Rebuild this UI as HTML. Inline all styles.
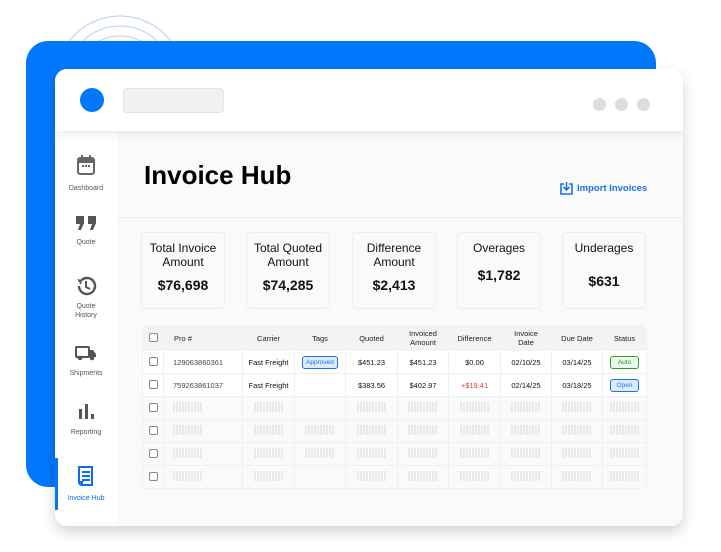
<!DOCTYPE html>
<html><head><style>
*{box-sizing:border-box;margin:0;padding:0}
body{width:721px;height:552px;background:#fff;position:relative;overflow:hidden;font-family:"Liberation Sans",Arial,sans-serif;color:#111}
.abs{position:absolute}
.bd{left:26px;top:41px;width:630px;height:446px;background:#0078fb;border-radius:22px}
.win{left:55px;top:69px;width:628px;height:457px;background:#fff;border-radius:12px;box-shadow:0 6px 14px rgba(0,0,0,.18);overflow:hidden}
.hdr{left:0;top:0;width:628px;height:62px;background:#fff;box-shadow:0 3px 8px rgba(0,0,0,.08);z-index:2}
.side{left:0;top:62px;width:62px;height:395px;background:#fff}
.main{left:62px;top:62px;width:566px;height:395px;background:#fafafa}
.ic{position:absolute;left:0;width:62px;text-align:center}
.lb{position:absolute;left:0;width:62px;text-align:center;font-size:7px;color:#555;line-height:9px}
.card{position:absolute;top:101px;width:84px;height:77px;background:#fafafa;border:1px solid #eee;border-radius:4px;text-align:center}
.card .t{font-size:12px;line-height:14px;margin-top:8px;color:#111}
.card .v{font-size:14px;font-weight:bold;margin-top:8px}
table{border-collapse:collapse;font-size:7.5px;width:504px;table-layout:fixed}
td,th{border:1px solid #f0f0f0;text-align:center;height:23px;padding:0}
th{background:#f2f3f5;font-weight:normal;height:25px;line-height:9px;border-color:#f2f3f5;color:#222}
.cb{display:inline-block;width:9px;height:9px;border:1px solid #888;border-radius:2px;background:#fff}
.ph{display:inline-block;width:30px;height:10px;background:repeating-linear-gradient(90deg,#e9e9e9 0 2px,transparent 2px 3px)}
.tag{display:inline-block;border:1px solid #1a73e8;background:#dcebfd;color:#1a73e8;border-radius:3px;padding:2px 3px;font-size:6.5px}
</style></head><body>
<svg class="abs" style="left:40px;top:5px" width="160" height="130"><g fill="none" stroke="#b9cde8" stroke-width="1"><circle cx="80" cy="75" r="64"/><circle cx="80" cy="75" r="54"/><circle cx="80" cy="75" r="44"/><circle cx="80" cy="75" r="34"/><circle cx="80" cy="75" r="24"/><circle cx="80" cy="75" r="14"/></g></svg>
<div class="abs bd"></div>
<div class="abs win">
 <div class="abs hdr">
  <div class="abs" style="left:25px;top:19px;width:24px;height:24px;border-radius:50%;background:#0078fb"></div>
  <div class="abs" style="left:68px;top:19px;width:101px;height:25px;border-radius:4px;background:#f0f1f3;border:1px solid #e2e3e5"></div>
  <div class="abs" style="left:538px;top:29px;width:13px;height:13px;border-radius:50%;background:#ddd"></div>
  <div class="abs" style="left:560px;top:29px;width:13px;height:13px;border-radius:50%;background:#ddd"></div>
  <div class="abs" style="left:582px;top:29px;width:13px;height:13px;border-radius:50%;background:#ddd"></div>
 </div>
 <div class="abs side">
  <div class="ic" style="top:23px"><svg width="20" height="22" viewBox="0 0 20 22"><rect x="2" y="4" width="16" height="16" rx="2" fill="none" stroke="#666" stroke-width="2"/><rect x="2" y="4" width="16" height="5" fill="#666"/><rect x="5" y="1" width="2" height="5" fill="#666"/><rect x="13" y="1" width="2" height="5" fill="#666"/><rect x="6" y="11" width="2" height="2" fill="#666"/><rect x="9" y="11" width="2" height="2" fill="#666"/><rect x="12" y="11" width="2" height="2" fill="#666"/></svg></div>
  <div class="lb" style="top:53px">Dashboard</div>
  <div class="ic" style="top:84px"><svg width="22" height="16" viewBox="0 0 22 16"><path d="M1 1h8v7l-3 7H3l2-6H1z" fill="#555"/><path d="M13 1h8v7l-3 7h-3l2-6h-4z" fill="#555"/></svg></div>
  <div class="lb" style="top:107px">Quote</div>
  <div class="ic" style="top:144px"><svg width="22" height="22" viewBox="0 0 22 22"><path d="M4 11a8 8 0 1 0 2.5-5.8" fill="none" stroke="#555" stroke-width="2.4"/><path d="M2 4l5 1-1 5z" fill="#555"/><path d="M11 6v6l4 2" fill="none" stroke="#555" stroke-width="2"/></svg></div>
  <div class="lb" style="top:171px">Quote<br>History</div>
  <div class="ic" style="top:214px"><svg width="22" height="16" viewBox="0 0 22 16"><rect x="1" y="2" width="13" height="10" rx="1" fill="none" stroke="#555" stroke-width="2"/><path d="M14 5h4l3 4v3h-7z" fill="#555"/><circle cx="5" cy="13" r="2.3" fill="#555"/><circle cx="17" cy="13" r="2.3" fill="#555"/></svg></div>
  <div class="lb" style="top:238px">Shipments</div>
  <div class="ic" style="top:271px"><svg width="20" height="18" viewBox="0 0 20 18"><rect x="3" y="7" width="3" height="10" fill="#555"/><rect x="9" y="2" width="3" height="15" fill="#555"/><rect x="15" y="12" width="3" height="5" fill="#555"/></svg></div>
  <div class="lb" style="top:297px">Reporting</div>
  <div class="abs" style="left:0;top:327px;width:3px;height:52px;background:#0078fb"></div>
  <div class="ic" style="top:334px"><svg width="20" height="24" viewBox="0 0 20 24"><path d="M4 2h12v18H6a3 3 0 0 1-3-3V2z" fill="none" stroke="#0a6cf0" stroke-width="2"/><rect x="6" y="6" width="8" height="2" fill="#0a6cf0"/><rect x="6" y="10" width="8" height="2" fill="#0a6cf0"/><rect x="6" y="14" width="8" height="2" fill="#0a6cf0"/><path d="M2 17h4a2 2 0 0 0 2 3" fill="none" stroke="#0a6cf0" stroke-width="2"/></svg></div>
  <div class="lb" style="top:363px;color:#0a6cf0">Invoice Hub</div>
 </div>
 <div class="abs main">
  <div class="abs" style="left:27px;top:29px;font-size:26px;font-weight:bold;color:#000">Invoice Hub</div>
  <div class="abs" style="left:443px;top:51px;font-size:9.5px;font-weight:bold;color:#1a73e8;display:flex;align-items:center;gap:4px"><svg width="13" height="13" viewBox="0 0 13 13"><path d="M4 2H1v10h11V2H9" fill="none" stroke="#1a73e8" stroke-width="1.6"/><path d="M6.5 0v8M3.5 5l3 3 3-3" fill="none" stroke="#1a73e8" stroke-width="1.6"/></svg>Import Invoices</div>
  <div class="abs" style="left:0;top:86px;width:566px;height:1px;background:#ececec"></div>
  <div class="card" style="left:24px"><div class="t">Total Invoice<br>Amount</div><div class="v">$76,698</div></div>
  <div class="card" style="left:129px"><div class="t">Total Quoted<br>Amount</div><div class="v">$74,285</div></div>
  <div class="card" style="left:235px"><div class="t">Difference<br>Amount</div><div class="v">$2,413</div></div>
  <div class="card" style="left:340px"><div class="t">Overages</div><div class="v" style="margin-top:12px">$1,782</div></div>
  <div class="card" style="left:445px"><div class="t">Underages</div><div class="v" style="margin-top:18px">$631</div></div>
  <div class="abs" style="left:25px;top:194px;border-radius:5px;overflow:hidden;background:#fafafa">
  <table>
   <colgroup><col style="width:21px"><col style="width:79px"><col style="width:52px"><col style="width:51px"><col style="width:52px"><col style="width:51px"><col style="width:52px"><col style="width:51px"><col style="width:51px"><col style="width:44px"></colgroup>
   <tr><th><span class="cb"></span></th><th style="text-align:left;padding-left:10px">Pro #</th><th>Carrier</th><th>Tags</th><th>Quoted</th><th>Invoiced<br>Amount</th><th>Difference</th><th>Invoice<br>Date</th><th>Due Date</th><th>Status</th></tr>
   <tr style="background:#fff"><td><span class="cb"></span></td><td style="text-align:left;padding-left:9px;color:#444">129063860361</td><td>Fast Freight</td><td><span class="tag">Approved</span></td><td>$451.23</td><td>$451.23</td><td>$0.00</td><td>02/10/25</td><td>03/14/25</td><td><span class="tag" style="border-color:#2ca02c;background:#f0fbf0;color:#1f8f1f;padding:2px 7px">Auto</span></td></tr>
   <tr style="background:#fff"><td><span class="cb"></span></td><td style="text-align:left;padding-left:9px;color:#444">759263861037</td><td>Fast Freight</td><td></td><td>$383.56</td><td>$402.97</td><td style="color:#e53935">+$19.41</td><td>02/14/25</td><td>03/18/25</td><td><span class="tag" style="padding:2px 6px">Open</span></td></tr>
   <tr><td><span class="cb"></span></td><td style="text-align:left;padding-left:9px"><span class="ph"></span></td><td><span class="ph"></span></td><td></td><td><span class="ph"></span></td><td><span class="ph"></span></td><td><span class="ph"></span></td><td><span class="ph"></span></td><td><span class="ph"></span></td><td><span class="ph"></span></td></tr>
   <tr><td><span class="cb"></span></td><td style="text-align:left;padding-left:9px"><span class="ph"></span></td><td><span class="ph"></span></td><td><span class="ph"></span></td><td><span class="ph"></span></td><td><span class="ph"></span></td><td><span class="ph"></span></td><td><span class="ph"></span></td><td><span class="ph"></span></td><td><span class="ph"></span></td></tr>
   <tr><td><span class="cb"></span></td><td style="text-align:left;padding-left:9px"><span class="ph"></span></td><td><span class="ph"></span></td><td><span class="ph"></span></td><td><span class="ph"></span></td><td><span class="ph"></span></td><td><span class="ph"></span></td><td><span class="ph"></span></td><td><span class="ph"></span></td><td><span class="ph"></span></td></tr>
   <tr><td><span class="cb"></span></td><td style="text-align:left;padding-left:9px"><span class="ph"></span></td><td><span class="ph"></span></td><td></td><td><span class="ph"></span></td><td><span class="ph"></span></td><td><span class="ph"></span></td><td><span class="ph"></span></td><td><span class="ph"></span></td><td><span class="ph"></span></td></tr>
  </table></div>
 </div>
</div>
</body></html>
